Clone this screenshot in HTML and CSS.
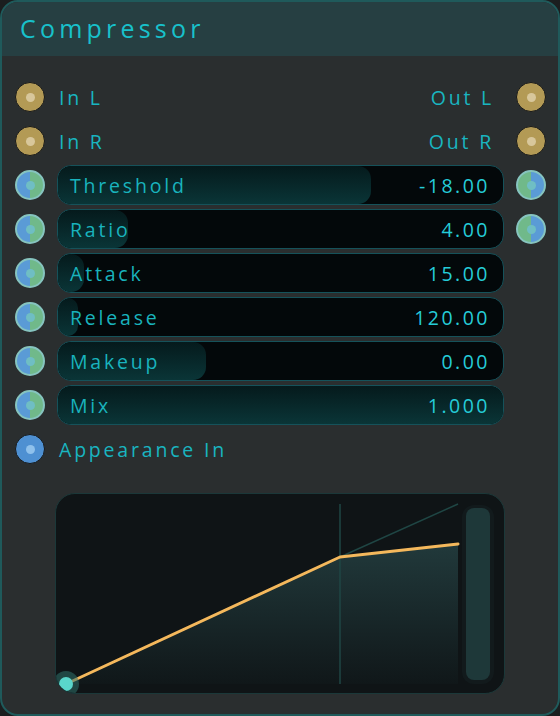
FILE: index.html
```html
<!DOCTYPE html>
<html>
<head>
<meta charset="utf-8">
<link rel="stylesheet" href="styles.css">
</head>
<body>
<div class="panel">
  <div class="header">Compressor</div>
  <div class="body">
    <div class="row">
      <span class="port gold"></span>
      <span class="lbl">In L</span>
      <span class="spacer"></span>
      <span class="lbl out">Out L</span>
      <span class="port gold"></span>
    </div>
    <div class="row">
      <span class="port gold"></span>
      <span class="lbl">In R</span>
      <span class="spacer"></span>
      <span class="lbl out">Out R</span>
      <span class="port gold"></span>
    </div>
    <div class="row">
      <span class="port split"></span>
      <div class="slider"><div class="fill" style="width:313px"></div><span class="sname">Threshold</span><span class="sval">-18.00</span></div>
      <span class="port split rev"></span>
    </div>
    <div class="row">
      <span class="port split"></span>
      <div class="slider"><div class="fill" style="width:70px"></div><span class="sname">Ratio</span><span class="sval">4.00</span></div>
      <span class="port split rev"></span>
    </div>
    <div class="row">
      <span class="port split"></span>
      <div class="slider"><div class="fill" style="width:26px"></div><span class="sname">Attack</span><span class="sval">15.00</span></div>
      <span class="port empty"></span>
    </div>
    <div class="row">
      <span class="port split"></span>
      <div class="slider"><div class="fill" style="width:20px"></div><span class="sname">Release</span><span class="sval">120.00</span></div>
      <span class="port empty"></span>
    </div>
    <div class="row">
      <span class="port split"></span>
      <div class="slider"><div class="fill" style="width:148px"></div><span class="sname">Makeup</span><span class="sval">0.00</span></div>
      <span class="port empty"></span>
    </div>
    <div class="row">
      <span class="port split"></span>
      <div class="slider"><div class="fill" style="width:446px"></div><span class="sname">Mix</span><span class="sval">1.000</span></div>
      <span class="port empty"></span>
    </div>
    <div class="row">
      <span class="port blue"></span>
      <span class="lbl">Appearance In</span>
    </div>
    <div class="graph">
      <svg width="450" height="201" viewBox="0 0 450 201">
        <defs>
          <linearGradient id="area" x1="0" y1="0" x2="0" y2="1">
            <stop offset="0" stop-color="#21393b"/>
            <stop offset="1" stop-color="#101719"/>
          </linearGradient>
        </defs>
        <polygon points="11,191 285,64 403,51 403,191" fill="url(#area)"/>
        <line x1="285" y1="11" x2="285" y2="191" stroke="#1f4644" stroke-width="1.5"/>
        <line x1="285" y1="64" x2="403" y2="11" stroke="#1f4644" stroke-width="1.5"/>
        <polyline points="11,191 285,64 403,51" fill="none" stroke="#f4b85c" stroke-width="3" stroke-linecap="round" stroke-linejoin="round"/>
        <rect x="407" y="12" width="32" height="179" rx="12" fill="#121a1c"/>
        <rect x="411" y="15" width="24" height="172" rx="8" fill="#1e3839"/>
        <circle cx="11" cy="191" r="13" fill="#2f716c" fill-opacity="0.55"/>
        <circle cx="11" cy="191" r="7" fill="#5ad6cb"/>
      </svg>
    </div>
  </div>
</div>
</body>
</html>
```

FILE: styles.css
```css
html, body {
  margin: 0;
  padding: 0;
  background: #1b1e1f;
}
body {
  width: 560px;
  height: 716px;
  font-family: "Open Sans", "Lato", sans-serif;
}
.panel {
  box-sizing: border-box;
  width: 560px;
  height: 716px;
  border: 2px solid #1f5a5b;
  border-radius: 18px;
  background: #2a2e2f;
  overflow: hidden;
  display: flex;
  flex-direction: column;
}
.header {
  height: 54px;
  flex: none;
  background: #263f42;
  color: #18c1cb;
  font-size: 25px;
  letter-spacing: 4.2px;
  padding-left: 18px;
  padding-bottom: 3px;
  display: flex;
  align-items: center;
  box-sizing: border-box;
}
.body {
  display: flex;
  flex-direction: column;
  padding: 21px 12px 0 13px;
  gap: 4px;
}
.row {
  height: 40px;
  display: flex;
  align-items: center;
  gap: 12px;
}
.spacer { flex: 1; }
.lbl {
  color: #19b5c0;
  font-size: 19.5px;
  letter-spacing: 2.8px;
  padding-left: 2px;
}
.lbl.out {
  padding-left: 0;
  margin-right: 10px;
}
.port {
  width: 30px;
  height: 30px;
  box-sizing: border-box;
  border-radius: 50%;
  flex: none;
  position: relative;
}
.port::after {
  content: "";
  position: absolute;
  left: 50%;
  top: 50%;
  width: 9px;
  height: 9px;
  margin: -4.5px 0 0 -4.5px;
  border-radius: 50%;
}
.gold {
  background: #b39a55;
  border: 1.5px solid #17191a;
}
.gold::after { background: #d8c79b; }
.blue {
  background: #4e90d2;
  border: 1.5px solid #17191a;
}
.blue::after { background: #8fc1ec; }
.split {
  background: linear-gradient(90deg, #5a9bd6 50%, #70b98a 50%);
  border: 2px solid #86c4bf;
}
.split.rev {
  background: linear-gradient(90deg, #70b98a 50%, #5a9bd6 50%);
}
.split::after { background: #6fbec4; }
.empty { visibility: hidden; }
.slider {
  position: relative;
  flex: 1;
  height: 40px;
  box-sizing: border-box;
  border: 1px solid #15525a;
  border-radius: 14px;
  background: #03080a;
  overflow: hidden;
  display: flex;
  align-items: center;
  justify-content: space-between;
  padding: 0 13px 0 12px;
}
.fill {
  position: absolute;
  left: 0;
  top: 0;
  bottom: 0;
  border-radius: 13px;
  background: linear-gradient(180deg, #051a1c 0%, #0a3537 100%);
}
.sname {
  position: relative;
  color: #19b3bd;
  font-size: 19.5px;
  letter-spacing: 2.8px;
}
.sval {
  position: relative;
  color: #25ccd8;
  font-size: 19.5px;
  letter-spacing: 2.5px;
}
.graph {
  margin: 20px 0 0 40px;
  width: 450px;
  height: 201px;
  box-sizing: border-box;
  border: 1px solid #1b3839;
  border-radius: 20px;
  background: #0f1416;
  overflow: hidden;
}
.graph svg {
  display: block;
  margin: -1px;
}
```
